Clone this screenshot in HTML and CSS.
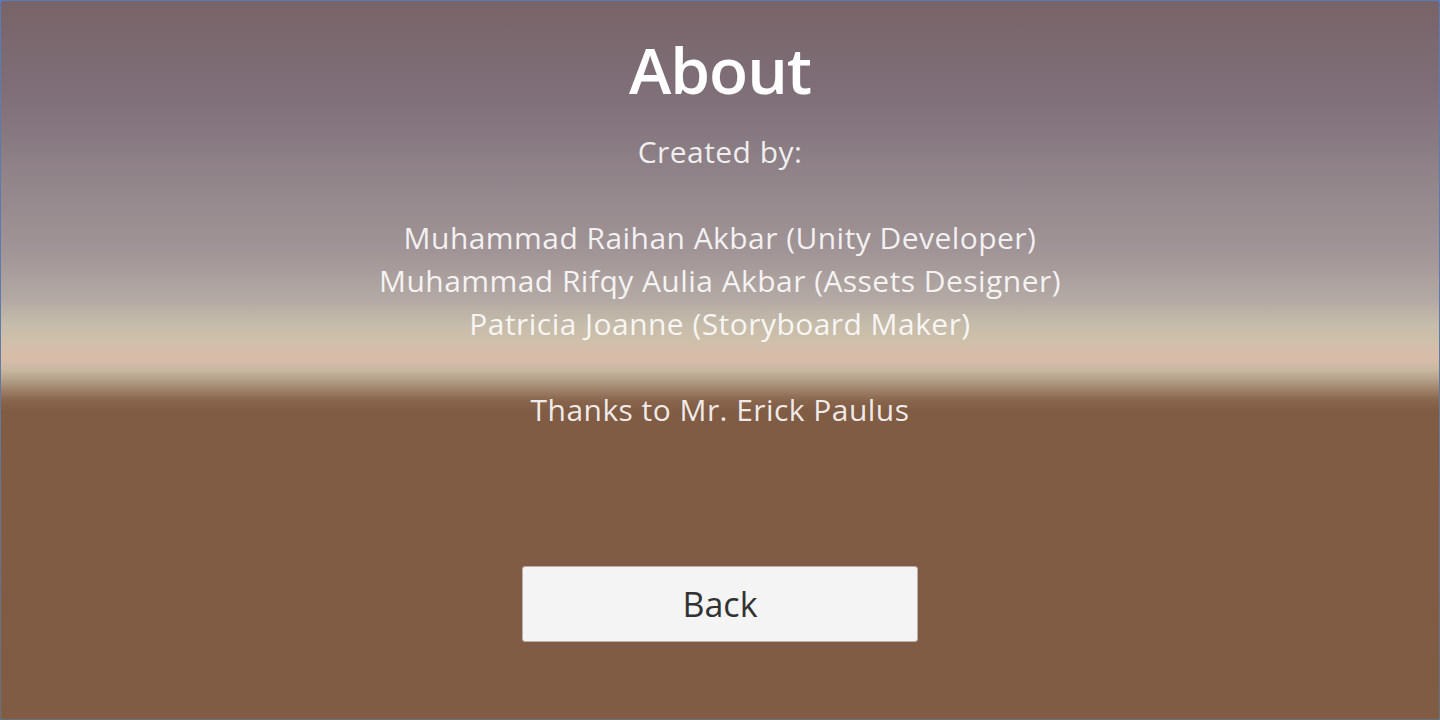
FILE: index.html
```
<!DOCTYPE html>
<html lang="en">
<head>
<meta charset="utf-8">
<title>About</title>
<link rel="stylesheet" href="styles.css">
</head>
<body>
<div class="frame">
  <main class="about">
    <h1 class="title">About</h1>
    <div class="credits">
      <p class="line">Created by:</p>
      <p class="line gap">Muhammad Raihan Akbar (Unity Developer)</p>
      <p class="line">Muhammad Rifqy Aulia Akbar (Assets Designer)</p>
      <p class="line">Patricia Joanne (Storyboard Maker)</p>
      <p class="line gap">Thanks to Mr. Erick Paulus</p>
    </div>
    <button class="back" type="button">Back</button>
  </main>
</div>
</body>
</html>
```
FILE: styles.css
```
html, body {
  margin: 0;
  padding: 0;
  width: 1440px;
  height: 720px;
  overflow: hidden;
}
body {
  background: linear-gradient(180deg, #5c7bb6 0%, #6479a6 50%, #6c6f78 100%);
  padding: 1px;
  box-sizing: border-box;
  font-family: "Open Sans", Lato, sans-serif;
}
.frame {
  width: 100%;
  height: 100%;
  border-radius: 3px;
  overflow: hidden;
  background: linear-gradient(180deg,
    #786468 0px,
    #80707a 100px,
    #968a8e 200px,
    #a09496 250px,
    #b4aaa4 300px,
    #c6bcaa 324px,
    #d0c0aa 342px,
    #d8bca8 354px,
    #d6bca8 360px,
    #c8b8a0 369px,
    #b29c86 380px,
    #9c7e66 390px,
    #88644c 400px,
    #805c44 410px,
    #805c44 720px);
}
.about {
  display: flex;
  flex-direction: column;
  align-items: center;
  padding-top: 29px;
}
.title {
  margin: 0;
  font-size: 64px;
  line-height: 80px;
  font-weight: 600;
  letter-spacing: -1px;
  color: #ffffff;
}
.credits {
  margin-top: 20px;
  display: flex;
  flex-direction: column;
  align-items: center;
  color: rgba(255, 255, 255, 0.88);
  font-size: 30px;
  line-height: 43px;
  letter-spacing: 0.45px;
}
.line {
  margin: 0;
  white-space: nowrap;
}
.gap {
  margin-top: 43px;
}
.back {
  margin-top: 135px;
  width: 396px;
  height: 76px;
  display: flex;
  align-items: center;
  justify-content: center;
  background: #f4f4f4;
  border: 1px solid #b8b0aa;
  border-radius: 3px;
  color: #323232;
  font-family: "Open Sans", Lato, sans-serif;
  font-size: 34px;
  padding: 0;
}
```
